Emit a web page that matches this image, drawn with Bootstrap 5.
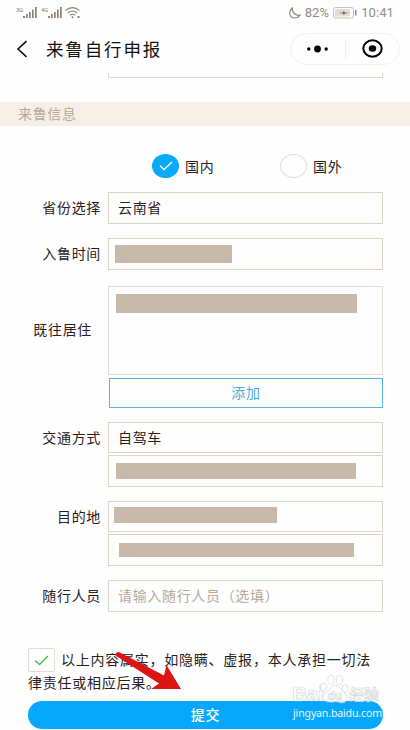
<!DOCTYPE html>
<html lang="zh-CN">
<head>
<meta charset="utf-8">
<meta name="viewport" content="width=device-width, initial-scale=1">
<title>来鲁自行申报</title>
<link href="https://cdn.jsdelivr.net/npm/bootstrap@5.3.0/dist/css/bootstrap.min.css" rel="stylesheet">
<style>
body{font-family:"Noto Sans CJK SC",sans-serif;font-size:14px;letter-spacing:.67px;line-height:20px;color:#2b211c;background:#fefefe}
.screen{width:410px;height:730px}
svg{display:block;flex:none}
.status{height:26px;padding:0 16px;font:13px/26px Roboto,sans-serif;letter-spacing:.1px;color:#958c83}
.topbar{height:47px;padding:0 10px 0 16px}
.topbar h1{font-size:17.5px;letter-spacing:1.85px;line-height:26px;font-weight:400;color:#111;margin:-2px 0 0 18px}
.topbar .back{margin-top:-2px}
.capsule{width:110px;height:32px;margin-top:-2px;border:1px solid #f4f1ed}
.capsule .half-l{width:55px;height:20px;border-right:1px solid #f0ece8}
.clipped{height:5px;margin:0 27px 0 108px;border:1px solid #ddd5cb;border-top:0}
.section-head{height:24px;margin-top:24px;padding-left:18px;background:#f5efe8;color:#b7aa9b;line-height:22px}
.choices{height:24px;margin:28px 0 14px;padding-left:152px}
.ring{width:27px;height:24px;border:1px solid #e5dfd8}
.ring.on{background:#08a9fb;border-color:#08a9fb}
.choices .text-in{width:101px;padding:2px 0 0 6px}
.line-row{margin-bottom:14px}
.name{width:108px;padding-right:7px;text-align:right;line-height:31px;flex:none}
.name.tall{padding-right:16px;line-height:87px}
.fields{width:275px}
.box{height:32px;border:1px solid #ddd4c8;padding-left:9px;line-height:29px}
.box.short{height:31px}
.box+.box{margin-top:2px}
.box.area{height:89px;border-color:#e6dbd0}
.box.hint{color:#b8a99a}
.mask{height:18px;background:#c7baab}
.m1{width:117px;margin:6px 0 0 -3px}
.m2{width:241px;height:19px;margin:7px 0 0 -2px}
.m3{width:240px;height:16px;margin:7px 0 0 -2px}
.m4{width:163px;height:16px;margin:5px 0 0 -4px}
.m5{width:235px;height:14px;margin:8px 0 0 1px}
.add{height:30px;width:274px;margin:3px 0 0 1px;border:1px solid #58b5dc;color:#4aaada;line-height:27px}
.agree{margin:36px 10px 0 28px;line-height:23px;letter-spacing:.76px}
.agree .words{margin-top:-2px}
.agree .rest{margin-top:-1px;margin-bottom:7px}
.tick{width:27px;height:24px;border:1px solid #e2ddd7;border-radius:2px;margin-right:6px}
.submit{height:28px;margin:0 27px 0 28px;background:#05a8fc;color:#fff;font-weight:500;line-height:26px}
.arrow{left:112px;top:648px}
.wm{left:290px;top:674px}
</style>
<script src="https://cdn.jsdelivr.net/npm/bootstrap@5.3.0/dist/js/bootstrap.bundle.min.js"></script>
</head>
<body>
<main class="screen position-relative overflow-hidden">
  <div class="status d-flex align-items-center">
    <svg width="65" height="14" viewBox="0 0 65 14" fill="#8d8073">
      <text x="0" y="5.500" font-size="6" font-family="Roboto" letter-spacing="0">3G</text>
      <path d="M7 10h2v2H7zM10 8h1.700v4H10zM13 6h1.700v6H13zM16 3.500h1.700V12H16zM19 1h1.700v11H19z"/>
      <text x="25" y="5.500" font-size="6" font-family="Roboto" letter-spacing="0">4G</text>
      <path d="M32 10h2v2h-2zM35 8h1.700v4H35zM38 6h1.700v6H38zM41 3.500h1.700V12H41zM44 1h1.700v11H44z"/>
      <g fill="none" stroke="#8d8073" stroke-width="1.100"><path d="M49.500 4.600q7-6 14 0M51.700 7q4.800-4 9.600 0M53.900 9.300q2.600-2 5.200 0"/></g><circle cx="56.500" cy="11.300" r="1"/><path d="M61.500 10h2v2h-2z"/>
    </svg>
    <svg class="ms-auto me-1" width="13" height="12" viewBox="0 0 13 12" fill="none" stroke="#8d8073" stroke-width="1.100"><path d="M4.300.8C-.2 4.500 1.500 11 6.700 11c2.500 0 4.300-1.200 5.300-3C8 9 4 6 4.300.8z"/></svg>
    <span>82%</span>
    <svg class="mx-1" width="24" height="12" viewBox="0 0 24 12"><rect x=".5" y=".5" width="20" height="10.500" rx="2" fill="#fff" stroke="#c9c1b8"/><path d="M2 2h15v7.500H2z" fill="#e4ddd5"/><path d="M5 6l5-.6.500-1.400L12 5.400l4 .6-4 .6-1.500 1.400-.5-1.400z" fill="#6f6155"/><path d="M22 3h1.500v5.500H22z" fill="#9c9084"/></svg>
    <span>10:41</span>
  </div>

  <header class="topbar d-flex align-items-center">
    <svg class="back" width="12" height="18" viewBox="0 0 12 18" fill="none" stroke="#111" stroke-width="1.600"><path d="M10.500 1.200L2 9l8.500 7.800"/></svg>
    <h1>来鲁自行申报</h1>
    <div class="capsule rounded-pill d-flex align-items-center ms-auto">
      <div class="half-l d-flex align-items-center justify-content-center"><svg width="22" height="8" viewBox="0 0 22 8"><circle cx="1.800" cy="4" r="1.700"/><circle cx="10.500" cy="4" r="3.400"/><circle cx="19.200" cy="4" r="1.700"/></svg></div>
      <div class="flex-fill d-flex justify-content-center"><svg width="21" height="19" viewBox="0 0 21 19"><ellipse cx="10.500" cy="9.500" rx="9.200" ry="8.200" fill="none" stroke="#000" stroke-width="2"/><ellipse cx="10.500" cy="9.500" rx="3.700" ry="3.300"/></svg></div>
    </div>
  </header>

  <div class="clipped"></div>
  <div class="section-head">来鲁信息</div>

  <div class="choices d-flex">
    <div class="ring on rounded-circle d-flex align-items-center justify-content-center"><svg width="14" height="10" viewBox="0 0 14 10" fill="none" stroke="#fff" stroke-width="1.300"><path d="M1 4.800l4 3.700L13 1"/></svg></div>
    <span class="text-in">国内</span>
    <div class="ring rounded-circle"></div>
    <span class="text-in">国外</span>
  </div>

  <div class="line-row d-flex"><div class="name">省份选择</div><div class="fields"><div class="box">云南省</div></div></div>
  <div class="line-row d-flex mb-3"><div class="name">入鲁时间</div><div class="fields"><div class="box"><div class="mask m1"></div></div></div></div>
  <div class="line-row d-flex"><div class="name tall">既往居住</div><div class="fields"><div class="box area"><div class="mask m2"></div></div><div class="add text-center">添加</div></div></div>
  <div class="line-row d-flex"><div class="name">交通方式</div><div class="fields"><div class="box short">自驾车</div><div class="box"><div class="mask m3"></div></div></div></div>
  <div class="line-row d-flex"><div class="name">目的地</div><div class="fields"><div class="box short"><div class="mask m4"></div></div><div class="box"><div class="mask m5"></div></div></div></div>
  <div class="line-row d-flex"><div class="name">随行人员</div><div class="fields"><div class="box hint">请输入随行人员（选填）</div></div></div>

  <div class="agree">
    <div class="d-flex align-items-center text-nowrap"><span class="tick d-flex align-items-center justify-content-center"><svg width="15" height="11" viewBox="0 0 15 11" fill="none" stroke="#42c63c" stroke-width="1.400"><path d="M1 5.500l4.500 4L14 1"/></svg></span><span class="words">以上内容属实，如隐瞒、虚报，本人承担一切法</span></div>
    <div class="rest">律责任或相应后果。</div>
  </div>
  <div class="submit rounded-pill text-center">提交</div>

  <svg class="arrow position-absolute" width="72" height="44" viewBox="0 0 72 44"><path d="M3.500 7.500Q3 4 7 4L52 27.500 54.500 17 69 41H39L47 35.500z" fill="#dc1414"/></svg>
  <svg class="wm position-absolute" width="96" height="50" viewBox="0 0 96 50">
    <g fill="#fff" fill-opacity=".8" stroke="#c8c8c8" stroke-opacity=".75" stroke-width=".7" letter-spacing="0">
      <text x="-2" y="27" font-family="Liberation Sans" font-weight="700" font-size="21" textLength="32" dx="4">Bai</text>
      <path d="M33 23c0-4 5-4 7-8 3-5 8-5 11 0 2 4 6 4 6 9 0 5-5 6-9 4-4-1-5 1-9 0-4 0-6-2-6-5z"/>
      <ellipse cx="33.500" cy="13" rx="3" ry="4"/><ellipse cx="41" cy="5.500" rx="3.200" ry="4.500"/><ellipse cx="49.500" cy="6" rx="3.200" ry="4.500"/><ellipse cx="55" cy="14.500" rx="3" ry="4"/>
      <text x="37.500" y="26" font-family="Liberation Sans" font-weight="700" font-size="12">du</text>
      <text x="59" y="26" font-family="Noto Sans CJK SC" font-weight="700" font-size="15">经验</text>
    </g>
    <text x="3" y="43" fill="#e7f6ff" font-family="Noto Sans" font-size="10.500" textLength="89" letter-spacing="0">jingyan.baidu.com</text>
  </svg>
</main>
</body>
</html>
